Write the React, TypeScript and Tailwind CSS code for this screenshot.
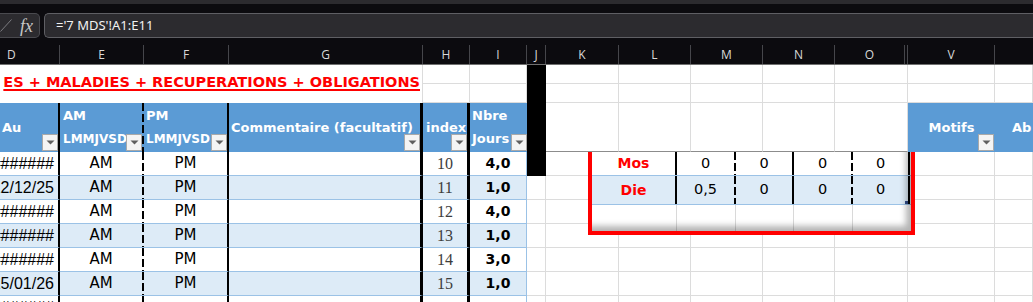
import React from "react";

const GRID =
  "grid grid-cols-[60px_84px_85px_194px_47px_57px_19px_73px_72px_72px_72px_73px_87px_1fr]";
const WC = "border-r border-b border-r-[#dcdcdc] border-b-[#dcdcdc] bg-white";
const HB = "relative bg-[#5b9bd5] text-[13px] font-bold text-white";

function Drop({ pos }: { pos: string }) {
  return (
    <div
      className={`absolute bottom-[1px] flex h-[17px] w-[16px] items-center justify-center border border-[#a9a9a9] bg-[#f4f4f4] ${pos}`}
    >
      <svg width="9" height="5" viewBox="0 0 9 5">
        <path d="M0.5 0.5 L8.5 0.5 L4.5 4.5 Z" fill="#5f5f5f" />
      </svg>
    </div>
  );
}

function Dash() {
  return (
    <div className="w-[2px] shrink-0 self-stretch bg-[repeating-linear-gradient(to_bottom,#000_0px,#000_8px,transparent_8px,transparent_11px)]" />
  );
}

function PicRow({
  h,
  bg,
  label,
  vals,
  last,
}: {
  h: string;
  bg: string;
  label: string;
  vals: string[];
  last?: boolean;
}) {
  return (
    <div
      className={`grid grid-cols-[85px_59px_58px_59px_57px] border-b border-b-[#9bc2e6] text-[14.5px] text-black ${h} ${bg}`}
    >
      <div className="flex items-center justify-center border-r-2 border-r-black text-[14px] font-bold text-[#ff0000]">
        {label}
      </div>
      <div className="flex">
        <div className="flex flex-1 items-center justify-center">{vals[0]}</div>
        <Dash />
      </div>
      <div className="flex items-center justify-center border-r-2 border-r-black">{vals[1]}</div>
      <div className="flex">
        <div className="flex flex-1 items-center justify-center">{vals[2]}</div>
        <Dash />
      </div>
      <div className="relative flex items-center justify-center border-r-2 border-r-black">
        {vals[3]}
        {last && <div className="absolute bottom-0 right-0 h-[3px] w-[3px] bg-[#2f4b8a]" />}
      </div>
    </div>
  );
}

const rows = [
  { d: "########", am: "AM", pm: "PM", idx: "10", n: "4,0", blue: false },
  { d: "12/12/25", am: "AM", pm: "PM", idx: "11", n: "1,0", blue: true },
  { d: "########", am: "AM", pm: "PM", idx: "12", n: "4,0", blue: false },
  { d: "########", am: "AM", pm: "PM", idx: "13", n: "1,0", blue: true },
  { d: "########", am: "AM", pm: "PM", idx: "14", n: "3,0", blue: false },
  { d: "15/01/26", am: "AM", pm: "PM", idx: "15", n: "1,0", blue: true },
  { d: "########", am: "", pm: "", idx: "", n: "", blue: false },
];

const seven = [0, 1, 2, 3, 4, 5, 6];

export default function App() {
  return (
    <div className="h-[302px] w-[1033px] overflow-hidden bg-[#0c0b0f] font-['DejaVu_Sans',sans-serif]">
      <div className="h-[4px] bg-[#2c2b2f]" />
      <div className="h-[9px]" />
      {/* formula bar */}
      <div className="flex h-[25px]">
        <div className="flex w-[40px] items-center rounded-r-[5px] border border-l-0 border-[#4a4a4f] bg-[#2c2b2f]">
          <svg width="12" height="13" viewBox="0 0 12 13" className="shrink-0">
            <line x1="0.5" y1="12.5" x2="11.5" y2="0.5" stroke="#7c7c80" strokeWidth="1" />
          </svg>
          <span className="ml-[8px] font-['Liberation_Serif',serif] text-[18px] italic leading-none text-[#c8c8c8]">
            fx
          </span>
        </div>
        <div className="ml-[4px] flex flex-1 items-center rounded-l-[5px] border border-r-0 border-[#5f5f64] bg-[#2c2b2f] pl-[11px] font-['Noto_Sans',sans-serif] text-[13px] text-[#f2f2f2]">
          {"='7 MDS'!A1:E11"}
        </div>
      </div>
      <div className="h-[7px]" />
      {/* column letters */}
      <div
        className={`${GRID} h-[20px] border-b border-[#707070] font-['Open_Sans',sans-serif] text-[12px] text-[#d9d9d9]`}
      >
        <div className="flex items-center border-r border-[#46464b] pl-[7px]">D</div>
        {["E", "F", "G", "H", "I", "J", "K", "L", "M", "N"].map((l) => (
          <div key={l} className="flex items-center justify-center border-r border-[#46464b]">
            {l}
          </div>
        ))}
        <div className="flex border-r border-[#46464b]">
          <div className="mr-[2px] flex flex-1 items-center justify-center border-r border-[#46464b]">O</div>
        </div>
        <div className="flex items-center justify-center border-r border-[#46464b]">V</div>
        <div />
      </div>
      {/* rows 1-3 */}
      <div className={`${GRID} grid-rows-[19px_19px_49px]`}>
        <div className="col-span-4 row-span-2 flex items-center justify-end overflow-hidden border-r border-r-[#dcdcdc] bg-white pb-[2px] pr-[2px]">
          <span className="whitespace-nowrap text-[14.5px] font-bold text-[#ff0000] underline decoration-[1.5px] underline-offset-[2px]">
            ES + MALADIES + RECUPERATIONS + OBLIGATIONS
          </span>
        </div>
        <div className={WC} />
        <div className={WC} />
        <div className="row-span-3 bg-black" />
        {seven.map((k) => (
          <div key={"a" + k} className={WC} />
        ))}
        <div className={WC} />
        <div className={WC} />
        {seven.map((k) => (
          <div key={"b" + k} className={WC} />
        ))}
        {/* row 3 headers */}
        <div className={`${HB} flex items-center border-r-2 border-r-black pl-[2px]`}>
          Au
          <Drop pos="right-0" />
        </div>
        <div className={`${HB} flex`}>
          <div className="flex flex-1 flex-col gap-[7px] pl-[3px] pt-[5px] leading-[16px]">
            <span>AM</span>
            <span className="text-[12px]">LMMJVSD</span>
          </div>
          <Dash />
          <Drop pos="right-[2px]" />
        </div>
        <div className={`${HB} flex flex-col gap-[7px] border-r-2 border-r-black pl-[2px] pt-[5px] leading-[16px]`}>
          <span>PM</span>
          <span className="text-[12px]">LMMJVSD</span>
          <Drop pos="right-0" />
        </div>
        <div className={`${HB} flex items-center border-r-[3px] border-r-black pl-[2px]`}>
          Commentaire (facultatif)
          <Drop pos="right-0" />
        </div>
        <div className={`${HB} flex items-center border-r-[3px] border-r-black pl-[3px]`}>
          index
          <Drop pos="right-0" />
        </div>
        <div className={`${HB} flex flex-col gap-[7px] pl-[2px] pt-[5px] leading-[16px]`}>
          <span>Nbre</span>
          <span>Jours</span>
          <Drop pos="right-0" />
        </div>
        {[0, 1, 2, 3, 4].map((k) => (
          <div
            key={"c" + k}
            className="border-b border-r border-r-[#dcdcdc] border-b-[#8c8c8c] bg-white"
          />
        ))}
        <div className={`${HB} flex items-center justify-center`}>
          Motifs
          <Drop pos="right-[1px]" />
        </div>
        <div className={`${HB} flex items-center whitespace-nowrap pl-[17px]`}>Ab</div>
      </div>
      {/* data rows */}
      <div className="relative">
        <div className={`${GRID} auto-rows-[24px]`}>
          {rows.map((r, i) => {
            const bg = r.blue ? "bg-[#ddebf7]" : "bg-white";
            return (
              <React.Fragment key={i}>
                <div
                  className={`${bg} flex items-center justify-end overflow-hidden whitespace-nowrap border-b border-r-2 border-b-[#9bc2e6] border-r-black pr-[4px] font-['Liberation_Sans',sans-serif] text-[16px] text-black`}
                >
                  {r.d}
                </div>
                <div className={`${bg} flex border-b border-b-[#9bc2e6]`}>
                  <div className="flex flex-1 items-center justify-center text-[15px] text-black">{r.am}</div>
                  <Dash />
                </div>
                <div
                  className={`${bg} flex items-center justify-center border-b border-r-2 border-b-[#9bc2e6] border-r-black text-[15px] text-black`}
                >
                  {r.pm}
                </div>
                <div className={`${bg} border-b border-r-[3px] border-b-[#9bc2e6] border-r-black`} />
                <div
                  className={`${bg} flex items-center justify-center border-b border-r-[3px] border-b-[#9bc2e6] border-r-black font-['Liberation_Serif',serif] text-[16px] text-[#3c3c3c]`}
                >
                  {r.idx}
                </div>
                <div
                  className={`${bg} flex items-center justify-center border-b border-r border-b-[#9bc2e6] border-r-[#9bc2e6] text-[14px] font-bold text-black`}
                >
                  {r.n}
                </div>
                <div className={i === 0 ? "bg-black" : WC} />
                {seven.map((k) => (
                  <div key={"d" + k} className={WC} />
                ))}
              </React.Fragment>
            );
          })}
        </div>
        {/* linked picture */}
        <div className="absolute left-[588px] top-0 h-[83px] w-[327px] border-x-4 border-b-4 border-[#ff0000] bg-white">
          <div className="relative flex h-full flex-col">
            <PicRow h="h-[24px]" bg="bg-white" label="Mos" vals={["0", "0", "0", "0"]} />
            <PicRow h="h-[29px]" bg="bg-[#ddebf7]" label="Die" vals={["0,5", "0", "0", "0"]} last />
            <div className="grid flex-1 grid-cols-[85px_59px_58px_59px_57px]">
              <div className="border-r border-r-[#d9d9d9]" />
              <div className="border-r border-r-[#d9d9d9]" />
              <div className="border-r border-r-[#d9d9d9]" />
              <div className="border-r border-r-[#d9d9d9]" />
              <div />
            </div>
            <div className="pointer-events-none absolute inset-0 shadow-[inset_-6px_-6px_6px_-1px_rgba(0,0,0,0.3)]" />
          </div>
        </div>
      </div>
    </div>
  );
}
